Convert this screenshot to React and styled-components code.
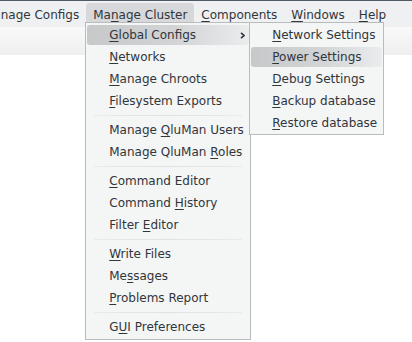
import React from "react";
import styled, { createGlobalStyle } from "styled-components";

const GlobalStyle = createGlobalStyle`
  html, body {
    margin: 0;
    padding: 0;
    background: #ffffff;
  }
  body {
    font-family: "DejaVu Sans", "Liberation Sans", sans-serif;
    font-size: 12px;
    color: #31363b;
    overflow: hidden;
  }
`;

const Window = styled.div`
  width: 412px;
  height: 342px;
  display: flex;
  flex-direction: column;
  overflow: hidden;
  background: #ffffff;
`;

const TitleEdge = styled.div`
  height: 1px;
  background: #4f5a65;
`;

const MenuBar = styled.div`
  height: 26px;
  display: flex;
  align-items: flex-start;
  padding-top: 2px;
  box-sizing: border-box;
  margin-left: -24px;
  background: #eff0f1;
  position: relative;
  z-index: 2;
`;

const BarItem = styled.div`
  position: relative;
  height: 23px;
  line-height: 24px;
  padding: 0 7px;
  white-space: nowrap;
  border-radius: 3px 3px 0 0;
  background: ${(p) => (p.$active ? "#d6d8da" : "transparent")};
`;

const ToolBand = styled.div`
  height: 28px;
  background: linear-gradient(#f9f9f9, #efefef);
`;

const Body = styled.div`
  flex: 1;
  background: #ffffff;
`;

const Popup = styled.div`
  position: absolute;
  top: ${(p) => p.$top}px;
  left: ${(p) => p.$left}px;
  width: ${(p) => p.$width}px;
  box-sizing: border-box;
  background: #f4f5f5;
  border: 1px solid #b9bbbd;
  padding: 1px 0 ${(p) => p.$bottom}px;
  display: flex;
  flex-direction: column;
  z-index: 3;
`;

const Entry = styled.div`
  position: relative;
  height: 22px;
  line-height: 22px;
  padding-left: ${(p) => p.$indent}px;
  white-space: nowrap;
  display: flex;
  align-items: center;
  justify-content: space-between;

  &::before {
    content: "";
    position: absolute;
    inset: 1px;
    border-radius: 3px;
    background: ${(p) =>
      p.$hot
        ? "linear-gradient(to right, #c6c8ca, #d2d4d6 55%, #ebeced)"
        : "transparent"};
  }
`;

const Label = styled.span`
  position: relative;
`;

const Key = styled.span`
  text-decoration: underline;
  text-decoration-thickness: 1px;
  text-underline-offset: 2px;
`;

const Arrow = styled.svg`
  position: relative;
  margin-right: 5px;
  width: 5px;
  height: 7px;
`;

const Separator = styled.div`
  height: 7px;
  display: flex;
  align-items: center;
  padding: 0 8px;

  &::after {
    content: "";
    flex: 1;
    height: 1px;
    background: linear-gradient(to right, #e9eaeb, #dfe0e1 50%, #e9eaeb);
  }
`;

function Mnemonic({ text, at }) {
  return (
    <Label>
      {text.slice(0, at)}
      <Key>{text[at]}</Key>
      {text.slice(at + 1)}
    </Label>
  );
}

const mainMenu = [
  { text: "Global Configs", at: 0, sub: true },
  { text: "Networks", at: 0 },
  { text: "Manage Chroots", at: 0 },
  { text: "Filesystem Exports", at: 0 },
  "sep",
  { text: "Manage QluMan Users", at: 7 },
  { text: "Manage QluMan Roles", at: 14 },
  "sep",
  { text: "Command Editor", at: 0 },
  { text: "Command History", at: 8 },
  { text: "Filter Editor", at: 7 },
  "sep",
  { text: "Write Files", at: 0 },
  { text: "Messages", at: 2 },
  { text: "Problems Report", at: 0 },
  "sep",
  { text: "GUI Preferences", at: 1 },
];

const subMenu = [
  { text: "Network Settings", at: 0 },
  { text: "Power Settings", at: 0, hot: true },
  { text: "Debug Settings", at: 0 },
  { text: "Backup database", at: 0 },
  { text: "Restore database", at: 0 },
];

function SubMenu() {
  return (
    <Popup $top={-2} $left={163} $width={135} $bottom={0}>
      {subMenu.map((item) => (
        <Entry key={item.text} $indent={22} $hot={item.hot}>
          <Mnemonic text={item.text} at={item.at} />
        </Entry>
      ))}
    </Popup>
  );
}

function ClusterMenu() {
  return (
    <Popup $top={19} $left={-1} $width={166} $bottom={1}>
      {mainMenu.map((item, i) =>
        item === "sep" ? (
          <Separator key={i} />
        ) : (
          <Entry key={item.text} $indent={23} $hot={item.sub}>
            <Mnemonic text={item.text} at={item.at} />
            {item.sub && (
              <>
                <Arrow viewBox="0 0 5 7">
                  <polyline
                    points="1,0.8 4,3.5 1,6.2"
                    fill="none"
                    stroke="#31363b"
                    strokeWidth="1.6"
                  />
                </Arrow>
                <SubMenu />
              </>
            )}
          </Entry>
        )
      )}
    </Popup>
  );
}

export default function App() {
  return (
    <>
      <GlobalStyle />
      <Window>
        <TitleEdge />
        <MenuBar>
          <BarItem>
            <Mnemonic text="Manage Configs" at={0} />
          </BarItem>
          <BarItem $active>
            <Mnemonic text="Manage Cluster" at={2} />
            <ClusterMenu />
          </BarItem>
          <BarItem>
            <Mnemonic text="Components" at={0} />
          </BarItem>
          <BarItem>
            <Mnemonic text="Windows" at={0} />
          </BarItem>
          <BarItem>
            <Mnemonic text="Help" at={0} />
          </BarItem>
        </MenuBar>
        <ToolBand />
        <Body />
      </Window>
    </>
  );
}
